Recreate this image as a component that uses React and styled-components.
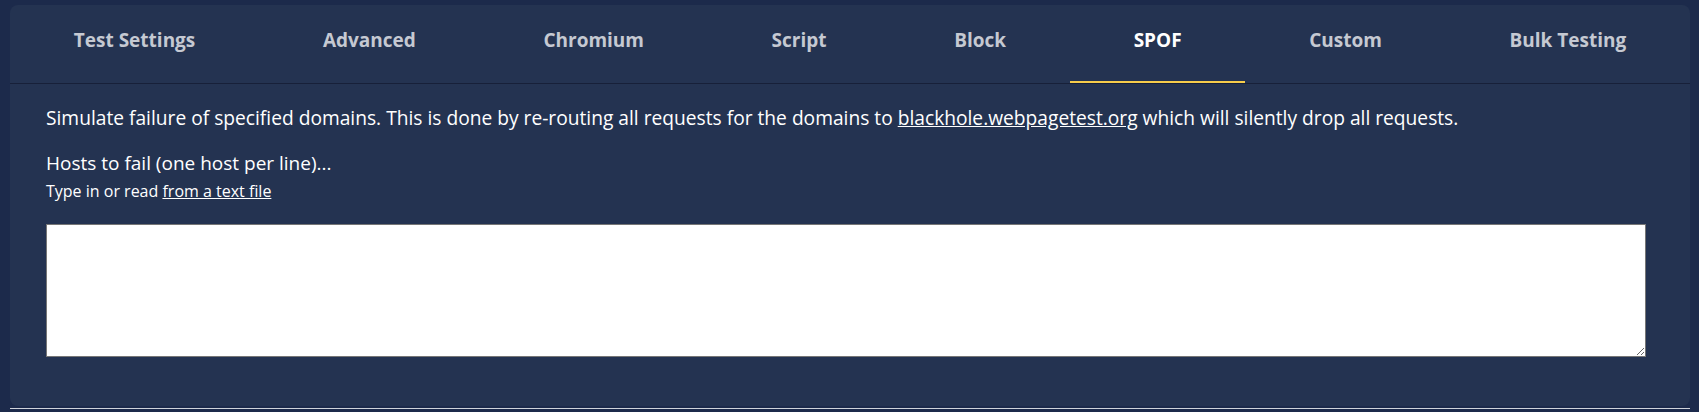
import { useState } from 'react';
import styled, { createGlobalStyle } from 'styled-components';

const GlobalStyle = createGlobalStyle`
  body {
    margin: 0;
    background-color: #1c2a4b;
    font-family: 'Open Sans', 'Noto Sans', sans-serif;
  }
`;

const Page = styled.div`
  padding: 5px 9px 0 10px;
`;

const Panel = styled.section`
  background-color: #243351;
  border-radius: 8px;
  padding-bottom: 49px;
`;

const TabList = styled.nav`
  display: flex;
  align-items: flex-start;
  height: 78px;
  border-bottom: 1px solid #172039;
`;

const Tab = styled.button`
  flex: 1 1 auto;
  box-sizing: border-box;
  background: none;
  border: none;
  padding: 22px 0 30px;
  font-family: inherit;
  font-size: 19px;
  font-weight: 700;
  line-height: 26px;
  text-align: center;
  cursor: pointer;
  color: ${(p) => (p.$active ? '#ffffff' : '#c5c9d2')};
  box-shadow: ${(p) => (p.$active ? 'inset 0 -2px 0 #f7cd4b' : 'none')};
`;

const Content = styled.div`
  padding: 21px 44px 0 36px;
  color: #ffffff;
`;

const Intro = styled.p`
  margin: 0;
  font-size: 19.2px;
  line-height: 26px;
`;

const Label = styled.label`
  display: block;
  margin-top: 19px;
  font-size: 19px;
  line-height: 26px;
`;

const Hint = styled.p`
  margin: 4px 0 0;
  font-size: 16px;
  line-height: 22px;
`;

const Link = styled.a`
  color: #ffffff;
  text-decoration: underline;
`;

const HostsInput = styled.textarea`
  display: block;
  box-sizing: border-box;
  width: 100%;
  height: 133px;
  margin-top: 22px;
  border: 1px solid #767676;
  background: #ffffff;
  font-family: inherit;
  font-size: 16px;
  resize: vertical;
`;

const Divider = styled.div`
  height: 1px;
  margin-top: 2px;
  background-color: #cfd3da;
`;

const tabs = ['Test Settings', 'Advanced', 'Chromium', 'Script', 'Block', 'SPOF', 'Custom', 'Bulk Testing'];

function App() {
  const [active, setActive] = useState('SPOF');

  return (
    <Page>
      <GlobalStyle />
      <Panel>
        <TabList role='tablist'>
          {tabs.map((tab) => (
            <Tab key={tab} $active={tab === active} onClick={() => setActive(tab)}>
              {tab}
            </Tab>
          ))}
        </TabList>
        <Content>
          <Intro>
            Simulate failure of specified domains. This is done by re-routing all requests for the domains to{' '}
            <Link href='#'>blackhole.webpagetest.org</Link> which will silently drop all requests.
          </Intro>
          <Label htmlFor='spof'>Hosts to fail (one host per line)...</Label>
          <Hint>
            Type in or read <Link href='#'>from a text file</Link>
          </Hint>
          <HostsInput id='spof' />
        </Content>
      </Panel>
      <Divider />
    </Page>
  );
}

export default App;
